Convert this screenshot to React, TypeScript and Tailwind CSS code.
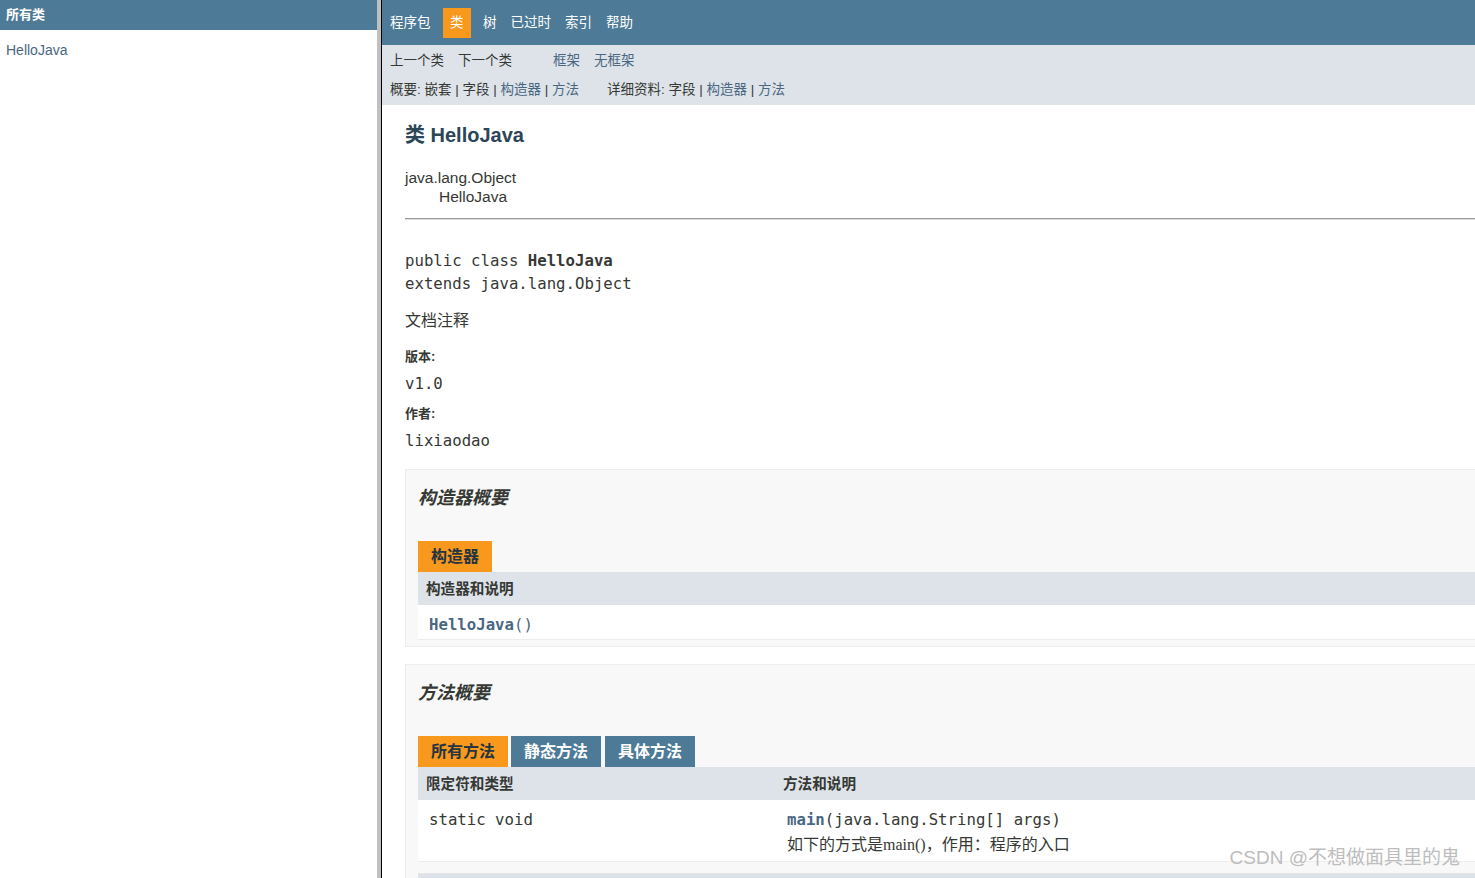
// Javadoc frame page for HelloJava: class list frame on the left, class detail on the right.

const sans = "font-['Liberation_Sans','Noto_Sans_CJK_SC',sans-serif]"
const mono = "font-['DejaVu_Sans_Mono','Noto_Sans_CJK_SC',monospace]"

function TopNav() {
  const items = ["程序包", "类", "树", "已过时", "索引", "帮助"]
  return (
    <div className="flex h-[45px] items-center bg-[#4d7a97] pl-[1px] pt-px text-[13.5px] text-white">
      {items.map((it) =>
        it === "类" ? (
          <span
            key={it}
            className="mx-[5.5px] flex h-[30px] items-center bg-[#f8981d] px-[7px] leading-none text-white"
          >
            {it}
          </span>
        ) : (
          <span key={it} className="px-[7px] leading-none">
            {it}
          </span>
        ),
      )}
    </div>
  )
}

function SubNav() {
  return (
    <div className="flex h-[60px] flex-col bg-[#dee3e9] pl-[1px] text-[#353833]">
      <div className="mt-[7px] flex h-[18px] items-center text-[13.5px] leading-none">
        <span className="px-[7px]">上一个类</span>
        <span className="px-[7px]">下一个类</span>
        <span className="ml-[27px] px-[7px] text-[#4a6782]">框架</span>
        <span className="px-[7px] text-[#4a6782]">无框架</span>
      </div>
      <div className="mt-[11px] flex h-[18px] items-center text-[13.5px] leading-none">
        <span className="pl-[7px]">
          概要:&nbsp;嵌套&nbsp;|&nbsp;字段&nbsp;|&nbsp;<span className="text-[#4a6782]">构造器</span>&nbsp;|&nbsp;
          <span className="text-[#4a6782]">方法</span>
        </span>
        <span className="ml-[28px]">
          详细资料:&nbsp;字段&nbsp;|&nbsp;<span className="text-[#4a6782]">构造器</span>&nbsp;|&nbsp;
          <span className="text-[#4a6782]">方法</span>
        </span>
      </div>
    </div>
  )
}

function Tab({ label, active, className = "" }: { label: string; active?: boolean; className?: string }) {
  return (
    <div
      className={`flex h-[31px] items-center px-[13px] text-[16px] font-bold leading-none ${
        active ? "bg-[#f8981d] text-[#253441]" : "bg-[#4d7a97] text-white"
      } ${className}`}
    >
      {label}
    </div>
  )
}

function SummaryBox({ title, children }: { title: string; children: React.ReactNode }) {
  return (
    <div className="border border-r-0 border-[#ededed] bg-[#f8f8f8] pl-[12px] pt-[15px] pb-[6px]">
      <h3 className="h-[26px] text-[18px] font-bold italic leading-[26px] text-[#353833]">{title}</h3>
      <div className="mt-[30px]">{children}</div>
    </div>
  )
}

export default function App() {
  return (
    <div className={`relative flex h-[878px] w-full overflow-hidden bg-white ${sans}`}>
      {/* class list frame */}
      <aside className="w-[377px] shrink-0">
        <div className="flex h-[30px] items-center bg-[#4d7a97] pl-[6px] text-[13px] font-bold text-white">
          所有类
        </div>
        <div className="mt-[11px] pl-[6px] text-[14px] leading-[18px] text-[#4a6782]">HelloJava</div>
      </aside>
      <div className="w-[4px] shrink-0 bg-[#c0c0c0]" />
      <div className="w-px shrink-0 bg-black" />

      {/* class frame */}
      <main className="flex-1 overflow-hidden text-[#353833]">
        <TopNav />
        <SubNav />

        <div className="pl-[23px]">
          <h2 className="mt-[16px] text-[20px] font-bold leading-[28px] text-[#2c4557]">类 HelloJava</h2>

          <div className="mt-[19px] text-[15.5px] leading-[19px]">
            <div>java.lang.Object</div>
            <div className="pl-[34px]">HelloJava</div>
          </div>

          <div className="mt-[12px] h-px bg-[#9a9a9a]" />
          <div className="h-px bg-[#dcdcdc]" />

          <pre className={`mt-[29px] text-[15.7px] leading-[23px] ${mono}`}>
            public class <b>HelloJava</b>
            {"\n"}extends java.lang.Object
          </pre>

          <p className="mt-[15px] text-[16px] leading-[22px]">文档注释</p>

          <div className="mt-[16px] text-[13px] font-bold leading-[18px]">版本:</div>
          <div className={`mt-[7px] text-[15.7px] leading-[22px] ${mono}`}>v1.0</div>
          <div className="mt-[10px] text-[13px] font-bold leading-[18px]">作者:</div>
          <div className={`mt-[7px] text-[15.7px] leading-[22px] ${mono}`}>lixiaodao</div>

          <div className="mt-[17px]">
            <SummaryBox title="构造器概要">
              <div className="flex">
                <Tab label="构造器" active />
              </div>
              <div className="flex h-[33px] items-center bg-[#dee3e9] pl-[8px] pt-[3px] text-[14.6px] font-bold">
                构造器和说明
              </div>
              <div className={`h-[35px] border-b border-[#eeeeee] bg-white pl-[11px] pt-[9px] text-[15.7px] leading-[22px] text-[#4a6782] ${mono}`}>
                <b>HelloJava</b>()
              </div>
            </SummaryBox>
          </div>

          <div className="mt-[17px]">
            <SummaryBox title="方法概要">
              <div className="flex">
                <Tab label="所有方法" active />
                <Tab label="静态方法" className="ml-[3px]" />
                <Tab label="具体方法" className="ml-[4px]" />
              </div>
              <div className="flex h-[33px] items-center bg-[#dee3e9] pt-[3px] text-[14.6px] font-bold">
                <div className="w-[365px] pl-[8px]">限定符和类型</div>
                <div>方法和说明</div>
              </div>
              <div className="flex h-[62px] border-b border-[#eeeeee] bg-white pt-[9px]">
                <div className={`w-[368px] pl-[11px] text-[15.7px] leading-[22px] ${mono}`}>static void</div>
                <div className="pl-px">
                  <div className={`text-[15.7px] leading-[22px] ${mono}`}>
                    <b className="text-[#4a6782]">main</b>(java.lang.String[] args)
                  </div>
                  <div className="mt-[3px] font-['Liberation_Serif','Noto_Sans_CJK_SC',serif] text-[16px] leading-[22px]">
                    如下的方式是main()，作用：程序的入口
                  </div>
                </div>
              </div>
              <div className="mt-[11px] h-[40px] border-t border-[#e4e4e4] bg-[#dee3e9]" />
            </SummaryBox>
          </div>
        </div>
      </main>

      {/* watermark */}
      <div className="pointer-events-none absolute bottom-[7px] right-[15px] text-[19px] leading-[26px] text-[#bdbdbd]">
        CSDN @不想做面具里的鬼
      </div>
    </div>
  )
}
